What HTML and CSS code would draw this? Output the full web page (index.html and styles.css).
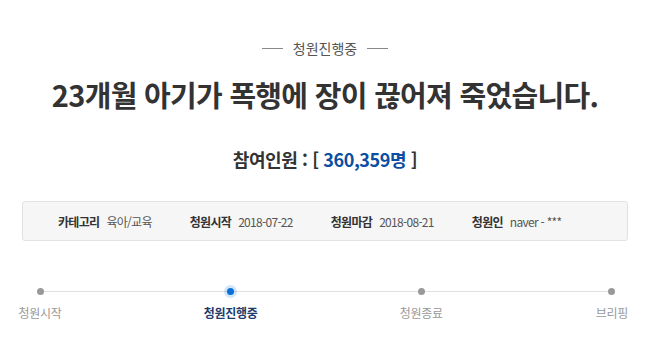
FILE: index.html
```html
<!DOCTYPE html>
<html lang="ko">
<head>
    <meta charset="UTF-8">
    <meta name="viewport" content="width=device-width, initial-scale=1.0">
    <title>청원진행중</title>
    <link rel="stylesheet" href="styles.css">
</head>
<body>

    <!-- Petition Header -->
    <div class="petition-head">
        <p class="status-label"><span class="rule"></span>청원진행중<span class="rule"></span></p>
        <h1 class="petition-title">23개월 아기가 폭행에 장이 끊어져 죽었습니다.</h1>
        <h2 class="petition-count">참여인원 : [ <span class="count-num">360,359명</span> ]</h2>
    </div>

    <!-- Petition Info Box -->
    <ul class="info-box">
        <li class="info-item"><strong>카테고리</strong>육아/교육</li>
        <li class="info-item"><strong>청원시작</strong>2018-07-22</li>
        <li class="info-item"><strong>청원마감</strong>2018-08-21</li>
        <li class="info-item"><strong>청원인</strong>naver - ***</li>
    </ul>

    <!-- Progress Steps -->
    <div class="progress">
        <div class="progress-line"></div>
        <div class="step">
            <span class="dot"></span>
            <span class="step-name">청원시작</span>
        </div>
        <div class="step active">
            <span class="dot"></span>
            <span class="step-name">청원진행중</span>
        </div>
        <div class="step">
            <span class="dot"></span>
            <span class="step-name">청원종료</span>
        </div>
        <div class="step">
            <span class="dot"></span>
            <span class="step-name">브리핑</span>
        </div>
    </div>

</body>
</html>
```

FILE: styles.css
```css
/* General Styling */
body {
    margin: 0;
    padding: 0;
    font-family: 'Noto Sans CJK KR', 'Noto Sans', sans-serif;
    background: white;
    color: #333;
    width: 650px;
}

/* Header */
.petition-head {
    text-align: center;
    padding-top: 36px;
}

.status-label {
    margin: 0;
    font-size: 14px;
    line-height: 24px;
    color: #555;
    display: flex;
    justify-content: center;
    align-items: center;
    gap: 10px;
}

.rule {
    display: inline-block;
    width: 21px;
    height: 1px;
    background: #888;
}

.petition-title {
    margin: 14px 0 0;
    font-size: 29px;
    line-height: 40px;
    font-weight: bold;
    letter-spacing: -0.7px;
    color: #333;
}

.petition-count {
    margin: 32px 0 0;
    font-size: 18px;
    line-height: 26px;
    font-weight: bold;
    letter-spacing: -0.4px;
    color: #333;
}

.count-num {
    color: #0b4ea2;
}

/* Info Box */
.info-box {
    list-style: none;
    margin: 29px 22px 0;
    padding: 0 0 0 35px;
    height: 38px;
    display: flex;
    align-items: center;
    gap: 38px;
    background: #f6f6f6;
    border: 1px solid #e2e2e2;
    border-radius: 3px;
    font-size: 12px;
    color: #555;
}

.info-item {
    letter-spacing: -0.7px;
}

.info-item strong {
    color: #333;
    margin-right: 7px;
}

/* Progress Steps */
.progress {
    position: relative;
    margin: 44px 18px 0 20px;
    display: flex;
    justify-content: space-between;
}

.progress-line {
    position: absolute;
    top: 6px;
    left: 20px;
    right: 20px;
    height: 1px;
    background: #e0e0e0;
}

.step {
    width: 40px;
    display: flex;
    flex-direction: column;
    align-items: center;
    position: relative;
}

.dot {
    width: 7px;
    height: 7px;
    margin-top: 3px;
    border-radius: 50%;
    background: #999;
}

.step-name {
    margin-top: 9px;
    font-size: 12px;
    letter-spacing: -0.3px;
    color: #999;
    white-space: nowrap;
}

.step.active .dot {
    background: #0a6fd8;
    box-shadow: 0 0 0 3px rgba(10, 111, 216, 0.18);
}

.step.active .step-name {
    color: #1d3b6b;
    font-weight: bold;
}
```
